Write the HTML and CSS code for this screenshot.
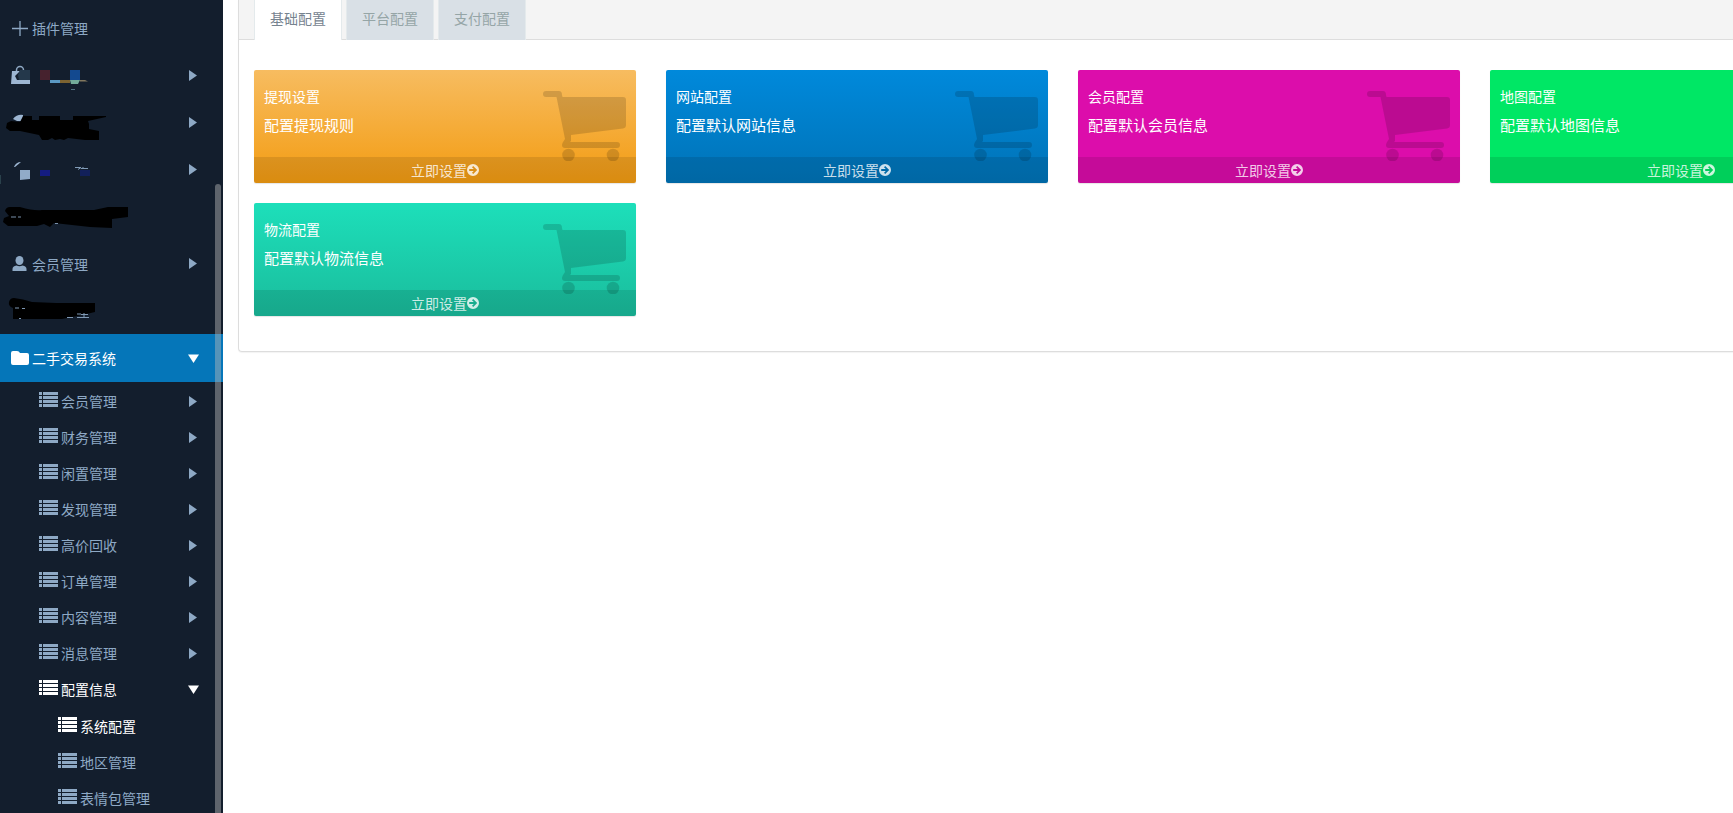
FILE: index.html
```html
<!DOCTYPE html>
<html lang="zh-CN">
<head>
<meta charset="utf-8">
<title>系统配置</title>
<link rel="stylesheet" href="styles.css">
</head>
<body>
<svg class="sprite" aria-hidden="true">
  <symbol id="i-list" viewBox="0 0 19 15"><path d="M0 0h3v3H0zM4 0h15v3H4zM0 4h3v3H0zM4 4h15v3H4zM0 8h3v3H0zM4 8h15v3H4zM0 12h3v3H0zM4 12h15v3H4z"/></symbol>
  <symbol id="i-right" viewBox="0 0 11 11"><path d="M1 0 9 5.500 1 11z"/></symbol>
  <symbol id="i-down" viewBox="0 0 11 11"><path d="M0 1.500H11L5.500 10z"/></symbol>
  <symbol id="i-cart" viewBox="0 0 83 70"><path d="M3 0h13q3 0 3 4l.5 2H80q3 0 3 3v25q0 3-3 3.500L28 44v6l-1 1h47a3 3 0 0 1 0 6H22q-3 0-3-3 0-2 3-6L13.500 6H3a3 3 0 0 1 0-6z"/><circle cx="25.500" cy="64" r="6.300"/><circle cx="70" cy="64" r="6.300"/></symbol>
  <symbol id="i-go" viewBox="0 0 12 12"><path fill-rule="evenodd" d="M6 0a6 6 0 1 1 0 12A6 6 0 0 1 6 0zM6.200 2 5 3.200 6.800 5H2.200v2h4.600L5 8.800 6.200 10l4-4z"/></symbol>
</svg>
<div class="layout">
  <nav class="sidebar">
    <ul class="menu">
      <li><a class="item first" href="#"><svg class="icon" viewBox="0 0 20 16"><path d="M2 8.500h16M10 1v15" stroke="currentColor" stroke-width="1.300"/></svg><span>插件管理</span></a></li>
      <li><a class="item" href="#" aria-label="菜单"><svg class="mask" viewBox="0 52 130 47">
        <path d="M16.500 72v-2a3.500 3.500 0 0 1 7 0v2" fill="none" stroke="#8ea8c3" stroke-width="1.500"/><path d="M12 71h8l-5 5 2 4h13v4H11z" fill="#9db6d2"/><path d="M20 70h10v10H19l-1-5z" fill="#24384b"/>
        <path d="M40 70h10v10H40z" fill="#46222e"/><path d="M50 80h10v3H50z" fill="#5b98c2"/><path d="M60 80h10v3H60z" fill="#7c6331"/><path d="M70 70h10v10H70z" fill="#13498f"/><path d="M70 80h10l-2 4h-7z" fill="#73ab9a"/><path d="M80 80h5l3 1.500h-8z" fill="#81775e"/><path d="M71 89h4v1h-4z" fill="#51707f"/></svg><svg class="arrow"><use href="#i-right"/></svg></a></li>
      <li><a class="item" href="#" aria-label="菜单"><svg class="mask" viewBox="0 99 130 47">
        <path d="M13 119q4-5 10-4v6h-6z" fill="#9db6d2"/><path d="M23 116h9v4h7v-4h21v4h13v-4h33v1l-18 4 1 3v5l10 2v9H85l-17-2-4 2-4-1-5 1-3-2-4 2h-6l-3-5-19-4H10l-4-3 1-5 4-2 9 1z" fill="#000"/></svg><svg class="arrow"><use href="#i-right"/></svg></a></li>
      <li><a class="item" href="#" aria-label="菜单"><svg class="mask" viewBox="0 146 130 47">
        <path d="M14 167q2-5 7-5l-6 5z" fill="#9db6d2"/><path d="M20 170h10v9l-10 1z" fill="#91abc8"/><path d="M0 175h1v9H0z" fill="#2a414b"/><path d="M40 170h10v6H40z" fill="#141c80"/><path d="M80 170h10v6H80z" fill="#12205a"/><path d="M75 167.500h6l-3 2M81 168.500h7M83 167v1" fill="none" stroke="#819bb6"/></svg><svg class="arrow"><use href="#i-right"/></svg></a></li>
      <li><a class="item" href="#" aria-label="菜单"><svg class="mask" viewBox="0 193 130 47">
        <path d="M10 207h10q14 4 22 3h52l14-3h20v10l-16 2v9l-22-1-36-4-4 4-6-3-7 2H8l-5-4 1-4 5-2-4-5q1-4 5-4z" fill="#000"/><path d="M11 217h5M18 217h3M55 223.500h3" stroke="#7890aa"/></svg></a></li>
      <li><a class="item" href="#"><svg class="icon" viewBox="0 0 20 16"><ellipse cx="9.500" cy="4.500" rx="4" ry="4.500"/><path d="M2.500 15v-2q0-3 4-3.500 3 1.500 6 0 4 .5 4 3.500v2z"/></svg><span>会员管理</span><svg class="arrow"><use href="#i-right"/></svg></a></li>
      <li><a class="item" href="#" aria-label="菜单"><svg class="mask" viewBox="0 287 130 47">
        <path d="M14 298q9 1 18 4l24 1h39v9l-13 3-20 4H13v-11q-5-2-4-6 1-4 5-4z" fill="#000"/><path d="M15 308h4M22 308.500h3M67 317.500h6M77 314h4M77 317.500h12M84 313v4M81 314.500h7M19 318.500h2" fill="none" stroke="#8099b4"/></svg></a></li>
      <li>
        <a class="item active" href="#"><svg class="icon" viewBox="0 0 20 16"><path d="M1 3q0-2 2-2h4q2 0 3 2h7q2 0 2 2v8q0 2-2 2H3q-2 0-2-2z"/></svg><span>二手交易系统</span><svg class="arrow"><use href="#i-down"/></svg></a>
        <ul class="submenu">
          <li><a class="subitem" href="#"><svg class="list"><use href="#i-list"/></svg><span>会员管理</span><svg class="arrow"><use href="#i-right"/></svg></a></li>
          <li><a class="subitem" href="#"><svg class="list"><use href="#i-list"/></svg><span>财务管理</span><svg class="arrow"><use href="#i-right"/></svg></a></li>
          <li><a class="subitem" href="#"><svg class="list"><use href="#i-list"/></svg><span>闲置管理</span><svg class="arrow"><use href="#i-right"/></svg></a></li>
          <li><a class="subitem" href="#"><svg class="list"><use href="#i-list"/></svg><span>发现管理</span><svg class="arrow"><use href="#i-right"/></svg></a></li>
          <li><a class="subitem" href="#"><svg class="list"><use href="#i-list"/></svg><span>高价回收</span><svg class="arrow"><use href="#i-right"/></svg></a></li>
          <li><a class="subitem" href="#"><svg class="list"><use href="#i-list"/></svg><span>订单管理</span><svg class="arrow"><use href="#i-right"/></svg></a></li>
          <li><a class="subitem" href="#"><svg class="list"><use href="#i-list"/></svg><span>内容管理</span><svg class="arrow"><use href="#i-right"/></svg></a></li>
          <li><a class="subitem" href="#"><svg class="list"><use href="#i-list"/></svg><span>消息管理</span><svg class="arrow"><use href="#i-right"/></svg></a></li>
          <li>
            <a class="subitem current" href="#"><svg class="list"><use href="#i-list"/></svg><span>配置信息</span><svg class="arrow"><use href="#i-down"/></svg></a>
            <ul class="leafmenu">
              <li><a class="subitem leaf current" href="#"><svg class="list"><use href="#i-list"/></svg><span>系统配置</span></a></li>
              <li><a class="subitem leaf" href="#"><svg class="list"><use href="#i-list"/></svg><span>地区管理</span></a></li>
              <li><a class="subitem leaf" href="#"><svg class="list"><use href="#i-list"/></svg><span>表情包管理</span></a></li>
            </ul>
          </li>
        </ul>
      </li>
    </ul>
    <div class="scroll-thumb"></div>
  </nav>
  <main class="content">
    <section class="panel">
      <div class="tabs" role="tablist">
        <button class="tab selected" type="button" role="tab" aria-selected="true">基础配置</button>
        <button class="tab" type="button" role="tab" aria-selected="false">平台配置</button>
        <button class="tab" type="button" role="tab" aria-selected="false">支付配置</button>
      </div>
      <div class="cards">
        <article class="card orange"><div class="card-body"><h3>提现设置</h3><p>配置提现规则</p></div><svg class="cart"><use href="#i-cart"/></svg><a class="card-link" href="#">立即设置<svg class="go"><use href="#i-go"/></svg></a></article>
        <article class="card blue"><div class="card-body"><h3>网站配置</h3><p>配置默认网站信息</p></div><svg class="cart"><use href="#i-cart"/></svg><a class="card-link" href="#">立即设置<svg class="go"><use href="#i-go"/></svg></a></article>
        <article class="card magenta"><div class="card-body"><h3>会员配置</h3><p>配置默认会员信息</p></div><svg class="cart"><use href="#i-cart"/></svg><a class="card-link" href="#">立即设置<svg class="go"><use href="#i-go"/></svg></a></article>
        <article class="card green"><div class="card-body"><h3>地图配置</h3><p>配置默认地图信息</p></div><svg class="cart"><use href="#i-cart"/></svg><a class="card-link" href="#">立即设置<svg class="go"><use href="#i-go"/></svg></a></article>
        <article class="card teal"><div class="card-body"><h3>物流配置</h3><p>配置默认物流信息</p></div><svg class="cart"><use href="#i-cart"/></svg><a class="card-link" href="#">立即设置<svg class="go"><use href="#i-go"/></svg></a></article>
      </div>
    </section>
  </main>
</div>
</body>
</html>
```
FILE: styles.css
```css
* { box-sizing: border-box; }
body {
  margin: 0;
  background: #fff;
  font: 14px/20px "Noto Sans CJK SC", sans-serif;
  overflow: hidden;
}
ul { list-style: none; margin: 0; padding: 0; }
a { color: inherit; text-decoration: none; }
svg { fill: currentColor; flex: none; }
.sprite { display: none; }
.layout { display: flex; height: 100vh; }

.sidebar {
  position: relative;
  flex: 0 0 223px;
  background: #131e2d;
  color: #8ea9c5;
  overflow: hidden;
}
.menu { padding-top: 5px; }
.item {
  display: flex;
  align-items: center;
  height: 47px;
  padding: 0 24px 0 10px;
}
.item.first { padding-bottom: 2px; }
.item.active { height: 48px; background: #0576b9; color: #fff; }
.icon { width: 20px; height: 16px; margin-right: 2px; }
.mask { width: 130px; height: 47px; margin-left: -10px; }
.arrow { width: 11px; height: 11px; margin-left: auto; }
.submenu { padding-top: 1px; }
.subitem {
  display: flex;
  align-items: center;
  height: 36px;
  padding: 0 24px 0 39px;
}
.list { width: 19px; height: 15px; margin: 0 3px 4px 0; }
.leafmenu { padding-top: 1px; }
.leaf { padding-left: 58px; }
.current { color: #fff; }
.scroll-thumb {
  position: absolute;
  top: 184px;
  bottom: 0;
  right: 2px;
  width: 6px;
  border-radius: 3px 3px 0 0;
  background: rgba(187, 187, 187, .45);
}

.content { flex: 1; min-width: 0; padding-left: 15px; overflow: hidden; }
.panel {
  min-width: max-content;
  border: 1px solid #ddd;
  border-top: 0;
  border-radius: 0 0 4px 4px;
  box-shadow: 0 1px 1px rgba(0, 0, 0, .05);
}
.tabs {
  display: flex;
  gap: 4px;
  height: 40px;
  padding-left: 15px;
  background: #f4f4f4;
  border-bottom: 1px solid #ddd;
}
.tab {
  height: 40px;
  padding: 0 15px 4px;
  border: 1px solid #e4eaec;
  border-width: 0 1px;
  background: #d9e0e6;
  color: #95a5a6;
  font: inherit;
}
.tab.selected { background: #fff; color: #76838f; }
.cards {
  display: grid;
  grid-template-columns: repeat(4, minmax(382px, 1fr));
  gap: 20px 30px;
  padding: 30px 15px 35px;
}
.card {
  position: relative;
  display: flex;
  flex-direction: column;
  height: 113px;
  border-radius: 2px;
  color: #fff;
  overflow: hidden;
  box-shadow: 0 1px 1px rgba(0, 0, 0, .1);
}
.card-body { flex: 1; padding: 16px 10px 0; }
.card h3 { margin: 0 0 8px; font-size: 14px; font-weight: 400; line-height: 20px; }
.card p { margin: 0; font-size: 15px; line-height: 22px; }
.cart {
  position: absolute;
  top: 21px;
  right: 10px;
  width: 83px;
  height: 70px;
  color: rgba(0, 0, 0, .15);
}
.card-link {
  position: relative;
  display: flex;
  justify-content: center;
  align-items: center;
  height: 26px;
  padding-bottom: 1px;
  background: rgba(0, 0, 0, .1);
  color: rgba(255, 255, 255, .8);
}
.go { width: 12px; height: 12px; }
.orange { background: linear-gradient(#f7bc60, #f39c12); }
.blue { background: linear-gradient(#0089db, #0073b7); }
.magenta { background: #dc0dab; }
.green { background: #00e765; }
.teal { background: linear-gradient(#1ddfba, #1abc9c); }
```
